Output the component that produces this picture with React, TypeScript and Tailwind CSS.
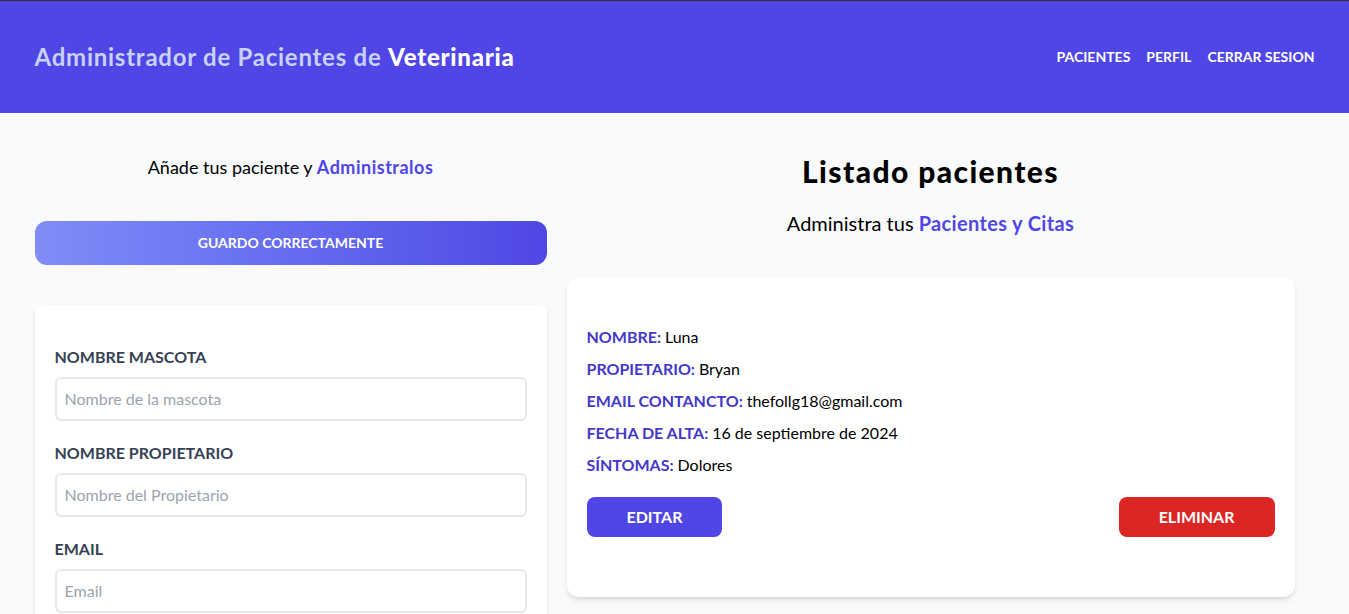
import React from "react";

function Field({ label, placeholder }: { label: string; placeholder: string }) {
  return (
    <div className="mb-5">
      <label className="block text-gray-700 uppercase font-bold text-[16px] leading-6">{label}</label>
      <input
        type="text"
        placeholder={placeholder}
        className="border-2 border-[#e5e7eb] w-full p-2 mt-2 placeholder-[#9ca3af] rounded-md text-[16px] leading-6 bg-white outline-none"
      />
    </div>
  );
}

function Row({ label, value }: { label: string; value: string }) {
  return (
    <p className="font-bold uppercase text-[#4338ca] my-2 leading-6">
      {label} <span className="font-normal normal-case text-black">{value}</span>
    </p>
  );
}

export default function App() {
  return (
    <div className="min-h-screen bg-[#f9fafb] text-black" style={{ fontFamily: "Lato, 'Noto Sans', sans-serif" }}>
      <header className="bg-[#4f46e5] border-t border-[#2f2f2f] py-10">
        <div className="max-w-[1280px] mx-auto flex justify-between items-center">
          <h1 className="font-bold text-2xl leading-8 text-[#c7d2fe] tracking-[0.75px]">
            Administrador de Pacientes de <span className="text-white font-black">Veterinaria</span>
          </h1>
          <nav className="flex gap-4">
            <a className="text-white text-sm font-bold uppercase">Pacientes</a>
            <a className="text-white text-sm font-bold uppercase">Perfil</a>
            <a className="text-white text-sm font-bold uppercase">Cerrar Sesion</a>
          </nav>
        </div>
      </header>
      <main className="max-w-[1280px] mx-auto mt-10 flex">
        <div className="w-2/5">
          <p className="text-lg leading-7 text-center mb-10">
            Añade tus paciente y <span className="text-[#4f46e5] font-bold tracking-[0.5px]">Administralos</span>
          </p>
          <div className="bg-gradient-to-r from-[#818cf8] to-[#4f46e5] text-center p-3 rounded-xl uppercase text-white font-bold text-sm leading-5 mb-10">
            Guardo Correctamente
          </div>
          <form className="bg-white py-10 px-5 shadow-md rounded-md">
            <Field label="Nombre Mascota" placeholder="Nombre de la mascota" />
            <Field label="Nombre Propietario" placeholder="Nombre del Propietario" />
            <Field label="Email" placeholder="Email" />
          </form>
        </div>
        <div className="w-3/5">
          <h2 className="font-black text-3xl leading-9 text-center tracking-[1.4px]">Listado pacientes</h2>
          <p className="text-xl leading-7 mt-5 mb-10 text-center">
            Administra tus <span className="text-[#4f46e5] font-bold tracking-[0.35px]">Pacientes y Citas</span>
          </p>
          <div className="mx-5 bg-white shadow-md px-5 py-10 rounded-xl">
            <Row label="Nombre:" value="Luna" />
            <Row label="Propietario:" value="Bryan" />
            <Row label="Email Contancto:" value="thefollg18@gmail.com" />
            <Row label="Fecha de Alta:" value="16 de septiembre de 2024" />
            <Row label="Síntomas:" value="Dolores" />
            <div className="flex justify-between mt-5 mb-5">
              <button className="py-2 px-10 bg-[#4f46e5] text-white uppercase font-bold rounded-lg leading-6">Editar</button>
              <button className="py-2 px-10 bg-[#dc2626] text-white uppercase font-bold rounded-lg leading-6">Eliminar</button>
            </div>
          </div>
        </div>
      </main>
    </div>
  );
}
